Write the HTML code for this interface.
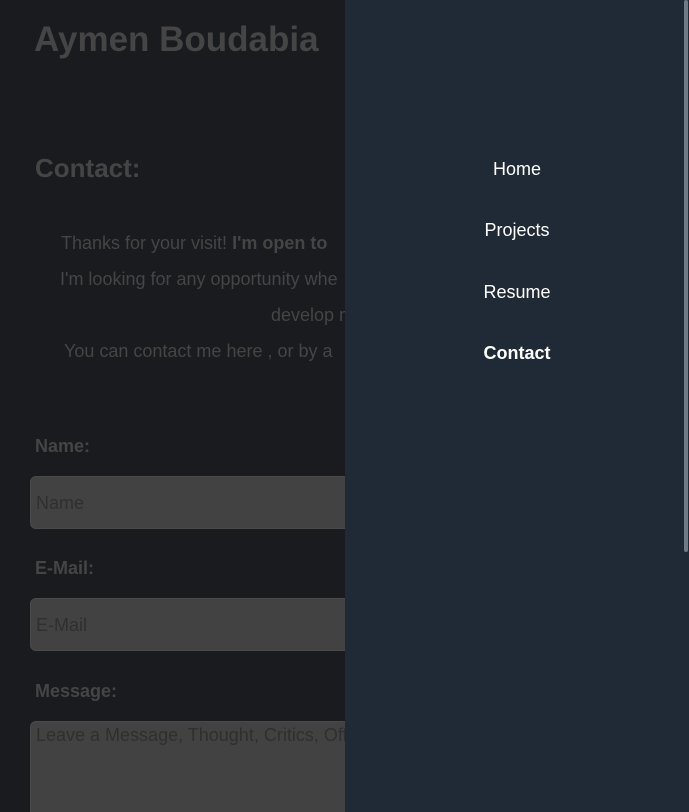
<!DOCTYPE html>
<html><head><style>
html,body{margin:0;padding:0;width:689px;height:812px;overflow:hidden;background:#1a1b1f;font-family:"Liberation Sans",sans-serif;}
.t{position:absolute;white-space:nowrap;color:#454545;}
.in{position:absolute;left:30px;width:400px;background:#424242;border:1px solid #4a4a4a;border-radius:6px;box-sizing:border-box;}
.ph{position:absolute;left:36px;color:#2f2f2f;font-size:18px;}
.panel{position:absolute;left:345px;top:0;width:344px;height:812px;background:#1f2a36;}
.nav{position:absolute;width:344px;left:345px;text-align:center;color:#fff;font-size:18px;}
</style></head><body>
<div class="t" style="left:34px;top:20px;font-size:35px;font-weight:bold;">Aymen Boudabia</div>
<div class="t" style="left:35px;top:153px;font-size:26px;font-weight:bold;">Contact:</div>
<div class="t" style="left:61px;top:233px;font-size:18px;">Thanks for your visit! <b>I'm open to</b></div>
<div class="t" style="left:60px;top:269px;font-size:18px;">I'm looking for any opportunity whe</div>
<div class="t" style="left:271px;top:305px;font-size:18px;">develop m</div>
<div class="t" style="left:64px;top:341px;font-size:18px;">You can contact me here , or by a</div>
<div class="t" style="left:35px;top:436px;font-size:18px;font-weight:bold;">Name:</div>
<div class="in" style="top:476px;height:53px;"></div>
<div class="ph" style="top:493px;">Name</div>
<div class="t" style="left:35px;top:558px;font-size:18px;font-weight:bold;">E-Mail:</div>
<div class="in" style="top:598px;height:53px;"></div>
<div class="ph" style="top:615px;">E-Mail</div>
<div class="t" style="left:35px;top:681px;font-size:18px;font-weight:bold;">Message:</div>
<div class="in" style="top:721px;height:91px;border-bottom:none;border-radius:6px 6px 0 0;"></div>
<div class="ph" style="top:725px;">Leave a Message, Thought, Critics, Off</div>
<div class="panel"></div>
<div class="nav" style="top:159px;">Home</div>
<div class="nav" style="top:220px;">Projects</div>
<div class="nav" style="top:282px;">Resume</div>
<div class="nav" style="top:343px;font-weight:bold;">Contact</div>
<div style="position:absolute;left:684px;top:0;width:4px;height:552px;background:#6e7b86;border-radius:2px;"></div>
</body></html>
